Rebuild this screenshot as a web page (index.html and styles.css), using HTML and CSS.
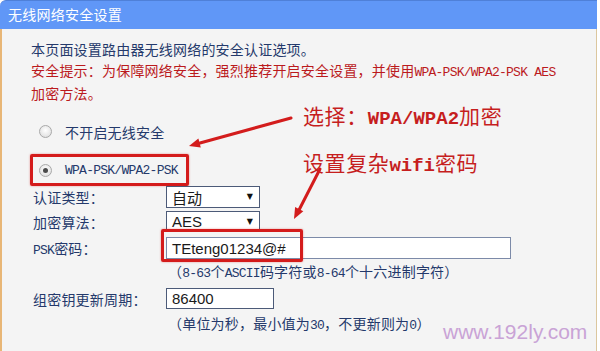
FILE: index.html
```html
<!DOCTYPE html>
<html lang="zh-CN">
<head>
<meta charset="utf-8">
<title>无线网络安全设置</title>
<link rel="stylesheet" href="styles.css">
</head>
<body>
<div class="page">
  <div class="header">无线网络安全设置</div>
  <div class="content">
    <p class="intro">本页面设置路由器无线网络的安全认证选项。</p>
    <p class="warn">安全提示：为保障网络安全，强烈推荐开启安全设置，并使用<span class="mono">WPA-PSK/WPA2-PSK AES</span><br>加密方法。</p>
    <div class="radio-row"><span class="radio"></span><span>不开启无线安全</span></div>
    <div class="radio-row boxed"><span class="radio checked"></span><span class="mono">WPA-PSK/WPA2-PSK</span></div>
    <div class="form-row r1"><span class="label">认证类型：</span><div class="select">自动<span class="caret">▼</span></div></div>
    <div class="form-row r2"><span class="label">加密算法：</span><div class="select latin">AES<span class="caret">▼</span></div></div>
    <div class="form-row r3"><span class="label"><span class="mono">PSK</span>密码：</span><div class="input wide">TEteng01234@#</div></div>
    <p class="hint h1">（<span class="mono">8-63</span>个<span class="mono">ASCII</span>码字符或<span class="mono">8-64</span>个十六进制字符）</p>
    <div class="form-row r4"><span class="label">组密钥更新周期：</span><div class="input short">86400</div></div>
    <p class="hint h2">（单位为秒，最小值为<span class="mono">30</span>，不更新则为<span class="mono">0</span>）</p>
  </div>
  <div class="psk-box"></div>
  <div class="note n1">选择：<span class="mono">WPA/WPA2</span>加密</div>
  <div class="note n2">设置复杂<span class="mono">wifi</span>密码</div>
  <svg class="arrows" width="600" height="351" viewBox="0 0 600 351">
    <line x1="291" y1="118" x2="200" y2="143" stroke="#d31c1c" stroke-width="3" stroke-linecap="round"/>
    <polygon points="189,146 200.8,147.6 198.4,138.6" fill="#d31c1c"/>
    <line x1="320" y1="169" x2="299" y2="210" stroke="#d31c1c" stroke-width="3" stroke-linecap="round"/>
    <polygon points="294,219 303.3,211.3 295.1,207" fill="#d31c1c"/>
  </svg>
  <div class="watermark">www.192ly.com</div>
</div>
</body>
</html>
```
FILE: styles.css
```css
* { box-sizing: border-box; }
html, body { margin: 0; padding: 0; }
body {
  width: 600px;
  height: 351px;
  overflow: hidden;
  background: #ffffff;
  font-family: "Noto Sans CJK SC", "Liberation Sans", sans-serif;
}
.page {
  position: relative;
  width: 597px;
  height: 351px;
}
.header {
  height: 29px;
  background: #6097f7;
  border-top: 1px solid #4f80d8;
  border-top-left-radius: 6px;
  color: #ffffff;
  font-size: 14px;
  letter-spacing: 0.25px;
  line-height: 27px;
  padding-left: 8px;
}
.content {
  height: 322px;
  background: #f4f4f4;
  border-left: 2px solid #e8b676;
  border-right: 1px solid #dcc79e;
  padding: 10px 0 0 29px;
  color: #24396b;
  font-size: 14px;
  letter-spacing: 0.2px;
}
.mono {
  font-family: "Liberation Mono", monospace;
  font-size: 13px;
  letter-spacing: -0.75px;
}
p { margin: 0; }
.intro, .warn { line-height: 21px; }
.warn { color: #bb1a1d; }
.radio-row {
  display: flex;
  align-items: center;
  height: 21px;
  padding-left: 8px;
  margin-top: 17px;
}
.radio-row .radio { margin-right: 13px; }
.radio-row.boxed {
  display: inline-flex;
  height: 32px;
  margin-top: 12px;
  margin-left: -1px;
  padding: 0 8px 0 6px;
  border: 3px solid #d41b1b;
  border-radius: 2px;
  box-shadow: 0 0 2px rgba(212, 27, 27, 0.5);
}
.radio {
  width: 13px;
  height: 13px;
  border-radius: 50%;
  border: 1px solid #a9a9a9;
  background: radial-gradient(circle at 50% 40%, #ffffff 0%, #e4e4e4 70%, #cfcfcf 100%);
  display: inline-flex;
  align-items: center;
  justify-content: center;
}
.radio.checked::after {
  content: "";
  width: 5px;
  height: 5px;
  border-radius: 50%;
  background: #4a4a4a;
}
.form-row {
  display: flex;
  align-items: center;
  margin-left: 2px;
}
.label { width: 133px; }
.r1 { height: 22px; margin-top: 0; }
.r2 { height: 21px; margin-top: 3px; }
.r3 { height: 22px; margin-top: 5px; }
.r4 { height: 21px; margin-top: 4px; }
.select, .input {
  background: #ffffff;
  border: 1px solid #4c5a78;
  height: 100%;
  display: flex;
  align-items: center;
  padding-left: 5px;
  color: #1a1a1a;
  font-size: 15px;
  letter-spacing: 0;
}
.select {
  width: 94px;
  position: relative;
}
.select.latin, .input { font-family: "Liberation Sans", Arial, sans-serif; }
.caret {
  position: absolute;
  right: 6px;
  top: 5px;
  font-family: "DejaVu Sans", sans-serif;
  font-size: 8px;
  line-height: 10px;
  color: #111111;
}
.input.wide { width: 345px; border-color: #7c8aa8; }
.input.short { width: 108px; }
.hint { line-height: 21px; margin-left: 137px; }
.h1 { margin-top: 2px; }
.h2 { margin-top: 4px; }
.psk-box {
  position: absolute;
  left: 161px;
  top: 229px;
  width: 142px;
  height: 33px;
  border: 3px solid #d41b1b;
  border-radius: 2px;
  box-shadow: 0 0 2px rgba(212, 27, 27, 0.5);
}
.note {
  position: absolute;
  left: 303px;
  color: #c61e1e;
  font-size: 21px;
  letter-spacing: 0.6px;
  line-height: 26px;
  white-space: nowrap;
}
.note .mono {
  font-size: 19px;
  font-weight: bold;
  letter-spacing: 0;
}
.n1 { top: 102px; }
.n2 { top: 149px; }
.arrows {
  position: absolute;
  left: 0;
  top: 0;
  pointer-events: none;
}
.watermark {
  position: absolute;
  left: 443px;
  top: 320px;
  font-family: "Liberation Sans", Arial, sans-serif;
  font-size: 21px;
  line-height: 24px;
  color: #c9a3d6;
}
```
